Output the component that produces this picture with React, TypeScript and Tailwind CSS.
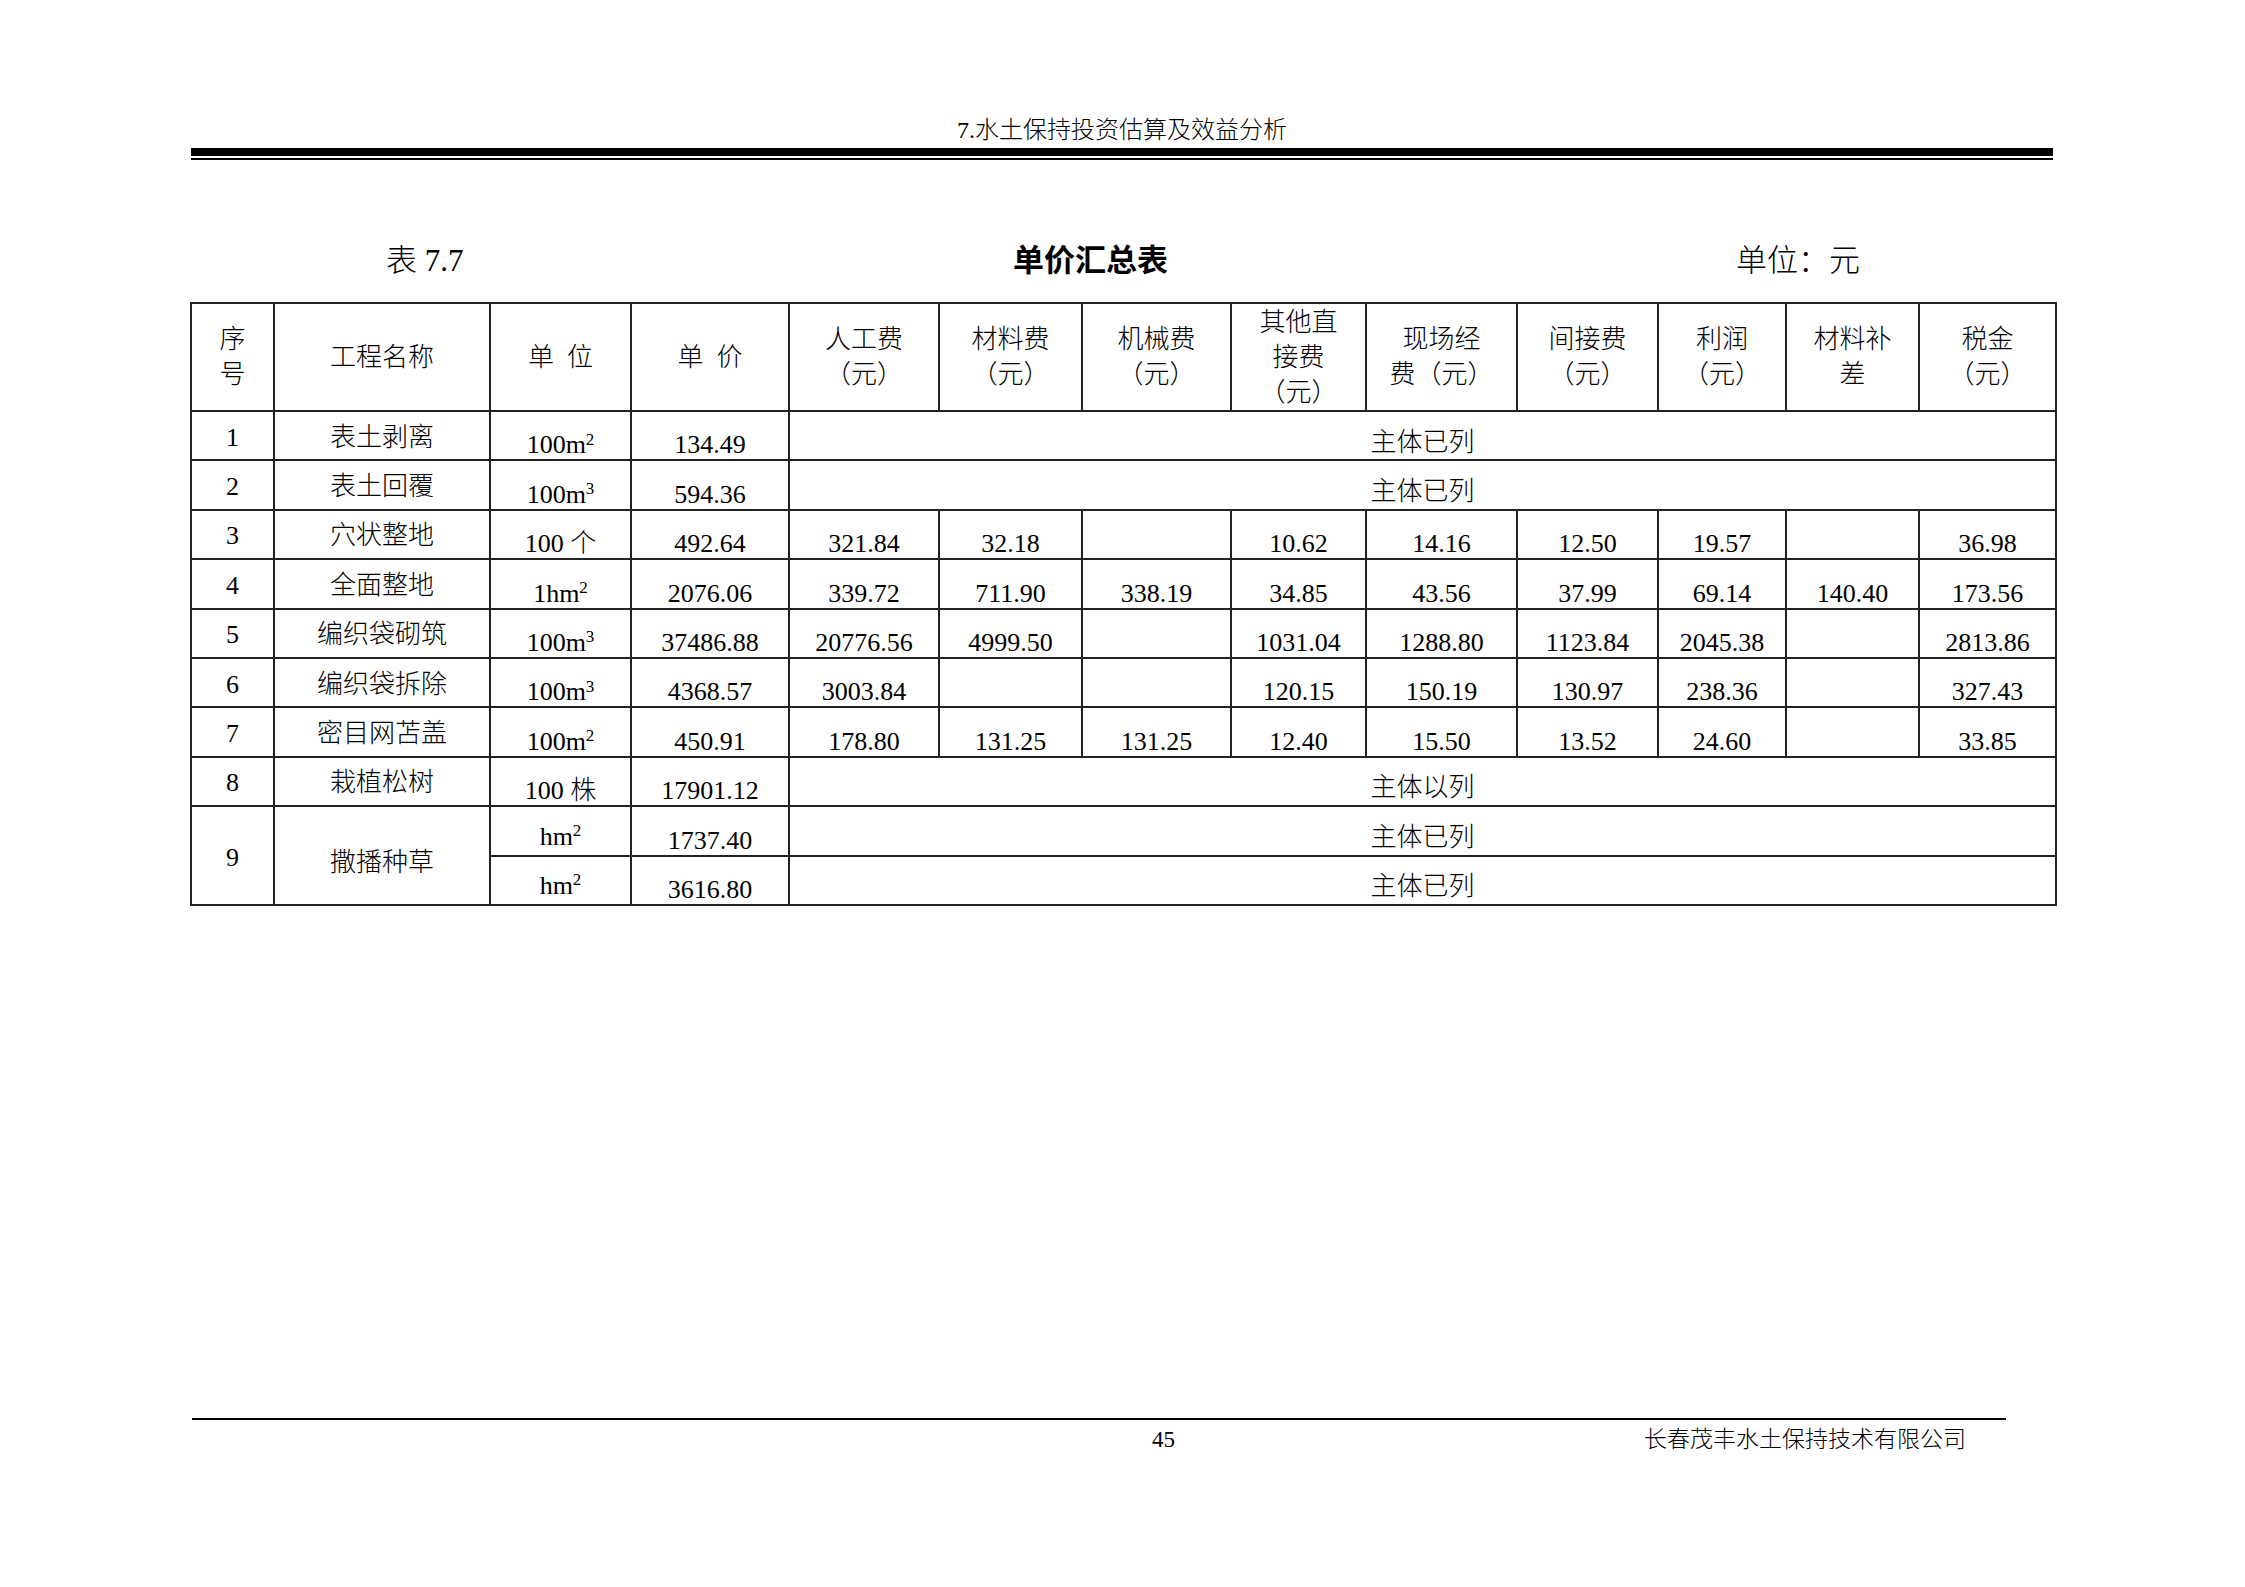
import React from "react";

type Row = {
  no: string;
  name: string;
  unit: React.ReactNode;
  price: string;
  merged?: string;
  vals?: string[];
};

const sup = "text-[17px]";

const m2 = (
  <>
    100m<sup className={sup}>2</sup>
  </>
);
const m3 = (
  <>
    100m<sup className={sup}>3</sup>
  </>
);

const rows: Row[] = [
  { no: "1", name: "表土剥离", unit: m2, price: "134.49", merged: "主体已列" },
  { no: "2", name: "表土回覆", unit: m3, price: "594.36", merged: "主体已列" },
  {
    no: "3",
    name: "穴状整地",
    unit: "100 个",
    price: "492.64",
    vals: ["321.84", "32.18", "", "10.62", "14.16", "12.50", "19.57", "", "36.98"],
  },
  {
    no: "4",
    name: "全面整地",
    unit: (
      <>
        1hm<sup className={sup}>2</sup>
      </>
    ),
    price: "2076.06",
    vals: ["339.72", "711.90", "338.19", "34.85", "43.56", "37.99", "69.14", "140.40", "173.56"],
  },
  {
    no: "5",
    name: "编织袋砌筑",
    unit: m3,
    price: "37486.88",
    vals: ["20776.56", "4999.50", "", "1031.04", "1288.80", "1123.84", "2045.38", "", "2813.86"],
  },
  {
    no: "6",
    name: "编织袋拆除",
    unit: m3,
    price: "4368.57",
    vals: ["3003.84", "", "", "120.15", "150.19", "130.97", "238.36", "", "327.43"],
  },
  {
    no: "7",
    name: "密目网苫盖",
    unit: m2,
    price: "450.91",
    vals: ["178.80", "131.25", "131.25", "12.40", "15.50", "13.52", "24.60", "", "33.85"],
  },
  { no: "8", name: "栽植松树", unit: "100 株", price: "17901.12", merged: "主体以列" },
];

const headers: string[][] = [
  ["序", "号"],
  ["工程名称"],
  ["单  位"],
  ["单  价"],
  ["人工费", "（元）"],
  ["材料费", "（元）"],
  ["机械费", "（元）"],
  ["其他直", "接费", "（元）"],
  ["现场经", "费（元）"],
  ["间接费", "（元）"],
  ["利润", "（元）"],
  ["材料补", "差"],
  ["税金", "（元）"],
];

const widths = [
  "w-[83px]",
  "w-[216px]",
  "w-[141px]",
  "w-[158px]",
  "w-[150px]",
  "w-[143px]",
  "w-[149px]",
  "w-[135px]",
  "w-[151px]",
  "w-[141px]",
  "w-[128px]",
  "w-[133px]",
  "w-[137px]",
];

const cell = "border-2 border-[#222] text-center";
const mid = `${cell} align-middle leading-[26px] px-0 pb-0 pt-[4px]`;
const low = `${cell} align-bottom leading-[26px] px-0 pt-0 pb-[1px]`;
const merged = `${cell} align-middle leading-[26px] px-0 pb-0 pt-[14px]`;

export default function App() {
  return (
    <div className="w-[2245px] h-[1587px] bg-white text-black font-light font-['Liberation_Serif','Noto_Sans_CJK_SC',serif]">
      {/* page header */}
      <div className="ml-[191px] w-[1862px] pt-[115px]">
        <div className="h-[30px] leading-[30px] text-[24px] text-center">7.水土保持投资估算及效益分析</div>
        <div className="mt-[3px] h-[8px] bg-black" />
        <div className="mt-[2px] h-[2px] bg-black" />
      </div>

      {/* table title */}
      <div className="ml-[190px] w-[1865px] mt-[81px] flex h-[40px] leading-[40px]">
        <div className="w-[196px]" />
        <div className="w-[627px] text-[31px]">表 7.7</div>
        <div className="w-[723px] text-[31px] font-bold">单价汇总表</div>
        <div className="text-[31px]">单位：元</div>
      </div>

      <table className="ml-[190px] mt-[21px] w-[1865px] table-fixed border-collapse text-[26px]">
        <colgroup>
          {widths.map((w, i) => (
            <col key={i} className={w} />
          ))}
        </colgroup>
        <tbody>
          <tr className="h-[108px]">
            {headers.map((lines, i) => (
              <td key={i} className={`${cell} p-0 align-middle leading-[35px] whitespace-pre`}>
                {lines.map((l, j) => (
                  <div key={j}>{l}</div>
                ))}
              </td>
            ))}
          </tr>
          {rows.map((r) => (
            <tr key={r.no} className="h-[49.4px]">
              <td className={mid}>{r.no}</td>
              <td className={mid}>{r.name}</td>
              <td className={`${low} whitespace-pre`}>{r.unit}</td>
              <td className={low}>{r.price}</td>
              {r.merged ? (
                <td colSpan={9} className={merged}>
                  {r.merged}
                </td>
              ) : (
                r.vals!.map((v, i) => (
                  <td key={i} className={low}>
                    {v}
                  </td>
                ))
              )}
            </tr>
          ))}
          <tr className="h-[49.4px]">
            <td rowSpan={2} className={mid}>
              9
            </td>
            <td rowSpan={2} className={`${cell} align-middle leading-[26px] px-0 pb-0 pt-[14px]`}>
              撒播种草
            </td>
            <td className={`${cell} align-bottom leading-[26px] px-0 pt-0 pb-[5px]`}>
              hm<sup className={sup}>2</sup>
            </td>
            <td className={low}>1737.40</td>
            <td colSpan={9} className={merged}>
              主体已列
            </td>
          </tr>
          <tr className="h-[49.4px]">
            <td className={`${cell} align-bottom leading-[26px] px-0 pt-0 pb-[5px]`}>
              hm<sup className={sup}>2</sup>
            </td>
            <td className={low}>3616.80</td>
            <td colSpan={9} className={merged}>
              主体已列
            </td>
          </tr>
        </tbody>
      </table>

      {/* page footer */}
      <div className="ml-[192px] w-[1814px] mt-[512px]">
        <div className="h-[2px] bg-black" />
        <div className="mt-[8px] flex h-[24px] leading-[24px]">
          <div className="w-[960px]" />
          <div className="text-[23px]">45</div>
          <div className="ml-auto pr-[40px] text-[23px]">长春茂丰水土保持技术有限公司</div>
        </div>
      </div>
    </div>
  );
}
